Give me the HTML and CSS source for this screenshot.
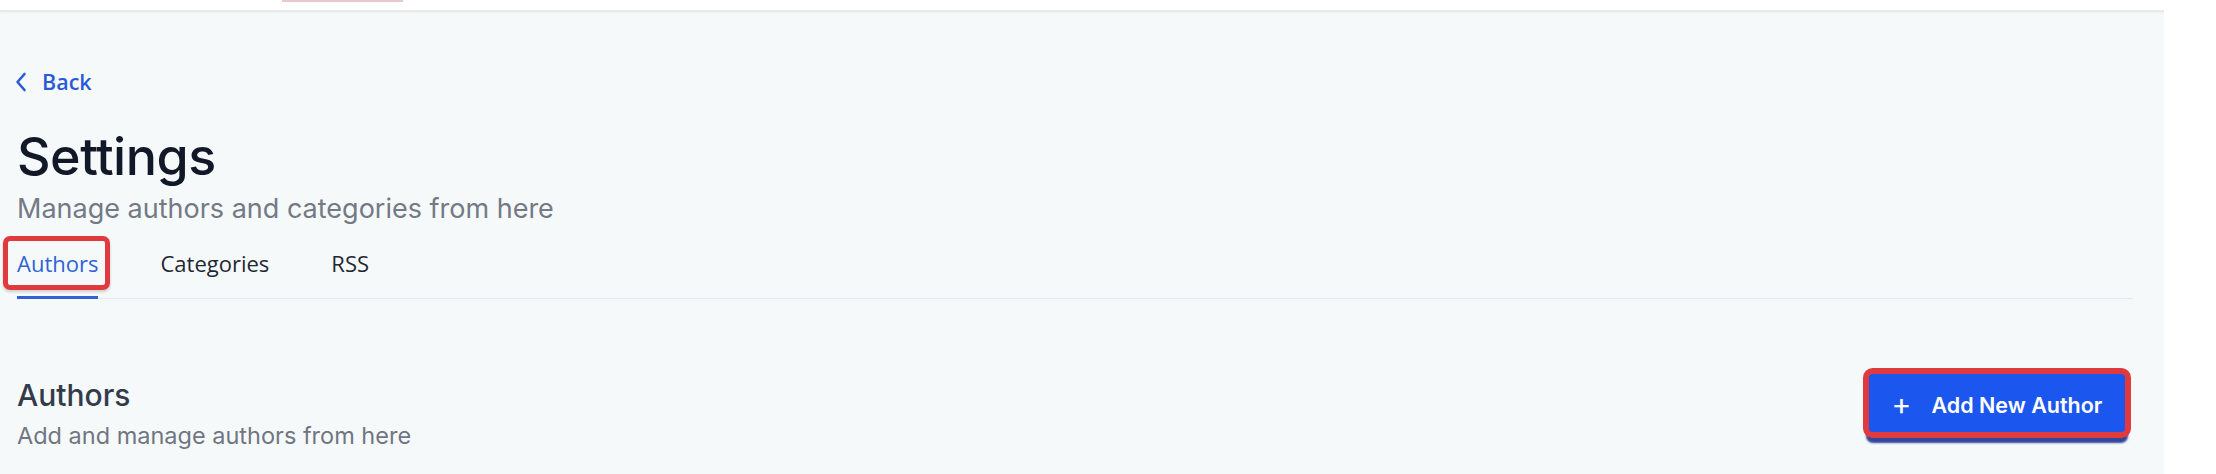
FILE: index.html
```html
<!DOCTYPE html>
<html lang="en">
<head>
<meta charset="utf-8">
<title>Settings</title>
<link rel="stylesheet" href="styles.css">
</head>
<body>
<div class="app">
  <header class="topbar"><span class="topbar-mark"></span></header>
  <main class="page">
    <a class="back" href="#">
      <svg class="back-icon" viewBox="0 0 12 20" width="12" height="20" aria-hidden="true"><path d="M9.5 2 L2.5 10 L9.5 18" fill="none" stroke="currentColor" stroke-width="2.6" stroke-linecap="round" stroke-linejoin="round"/></svg>
      <span>Back</span>
    </a>
    <h1 class="title">Settings</h1>
    <p class="subtitle">Manage authors and categories from here</p>
    <nav class="tabs">
      <a class="tab tab-active tab-marked" href="#">Authors</a>
      <a class="tab" href="#">Categories</a>
      <a class="tab" href="#">RSS</a>
    </nav>
    <section class="section-head">
      <div class="section-text">
        <h2 class="section-title">Authors</h2>
        <p class="section-sub">Add and manage authors from here</p>
      </div>
      <button class="btn-primary" type="button"><span class="btn-plus">+</span>Add New Author</button>
    </section>
  </main>
</div>
</body>
</html>
```

FILE: styles.css
```css
html, body {
  margin: 0;
  padding: 0;
  background: #ffffff;
  height: 100%;
}

.app {
  width: 2164px;
  height: 474px;
  overflow: hidden;
}

.topbar {
  height: 10px;
  background: #ffffff;
  border-bottom: 2px solid #e7e9eb;
  box-shadow: 0 1px 2px rgba(0, 0, 0, 0.04);
  position: relative;
}

.topbar-mark {
  position: absolute;
  left: 282px;
  top: 0;
  width: 121px;
  height: 2px;
  background: #e9c6cd;
}

.page {
  background: #f6f9fa;
  height: 462px;
  padding: 60px 31px 0 17px;
  box-sizing: border-box;
  font-family: Inter, "Noto Sans", sans-serif;
}

.back {
  display: flex;
  align-items: center;
  gap: 15px;
  height: 20px;
  margin-left: -2px;
  color: #2a5bd7;
  text-decoration: none;
  font-family: "Open Sans", "Noto Sans", sans-serif;
  font-weight: 600;
  font-size: 21.5px;
  line-height: 20px;
}

.back-icon {
  display: block;
}

.title {
  margin: 34px 0 0;
  font-size: 52px;
  line-height: 62px;
  font-weight: 500;
  color: #111827;
  letter-spacing: -0.5px;
}

.subtitle {
  margin: 5px 0 0;
  font-size: 27px;
  line-height: 32px;
  color: #737a85;
}

.tabs {
  margin-top: 23px;
  display: flex;
  gap: 62px;
  border-bottom: 1px solid #e6e9ec;
}

.tab {
  position: relative;
  display: block;
  font-family: "Open Sans", "Noto Sans", sans-serif;
  font-size: 22px;
  line-height: 30px;
  padding-bottom: 18px;
  margin-bottom: -1px;
  border-bottom: 3px solid transparent;
  color: #1f2733;
  text-decoration: none;
}

.tab-active {
  color: #2f63d6;
  border-bottom-color: #2f63d6;
}

.tab-marked::before {
  content: "";
  position: absolute;
  left: -14px;
  right: -12px;
  top: -12px;
  height: 54px;
  border: 5px solid #e0393e;
  border-radius: 7px;
  box-sizing: border-box;
  box-shadow: 0 2px 3px rgba(0, 0, 0, 0.18);
}

.section-head {
  margin-top: 75px;
  display: flex;
  justify-content: space-between;
  align-items: flex-start;
}

.section-title {
  margin: 3px 0 0;
  font-size: 30px;
  line-height: 36px;
  font-weight: 500;
  color: #333b4a;
}

.section-sub {
  margin: 8px 0 0;
  font-size: 23.5px;
  line-height: 30px;
  color: #6f7682;
}

.btn-primary {
  margin-right: 8px;
  width: 256px;
  height: 58px;
  border: none;
  border-radius: 4px;
  background: #1b57ee;
  color: #ffffff;
  font-family: Inter, "Noto Sans", sans-serif;
  font-weight: 600;
  font-size: 21.5px;
  display: flex;
  align-items: center;
  justify-content: center;
  gap: 20px;
  padding: 4px 0 0;
  box-sizing: border-box;
  box-shadow: 0 0 0 6px #e0393e, 0 8px 2px 3px #30469a;
}

.btn-plus {
  font-weight: 400;
  font-size: 30px;
  line-height: 1;
  margin-top: -3px;
}
```
